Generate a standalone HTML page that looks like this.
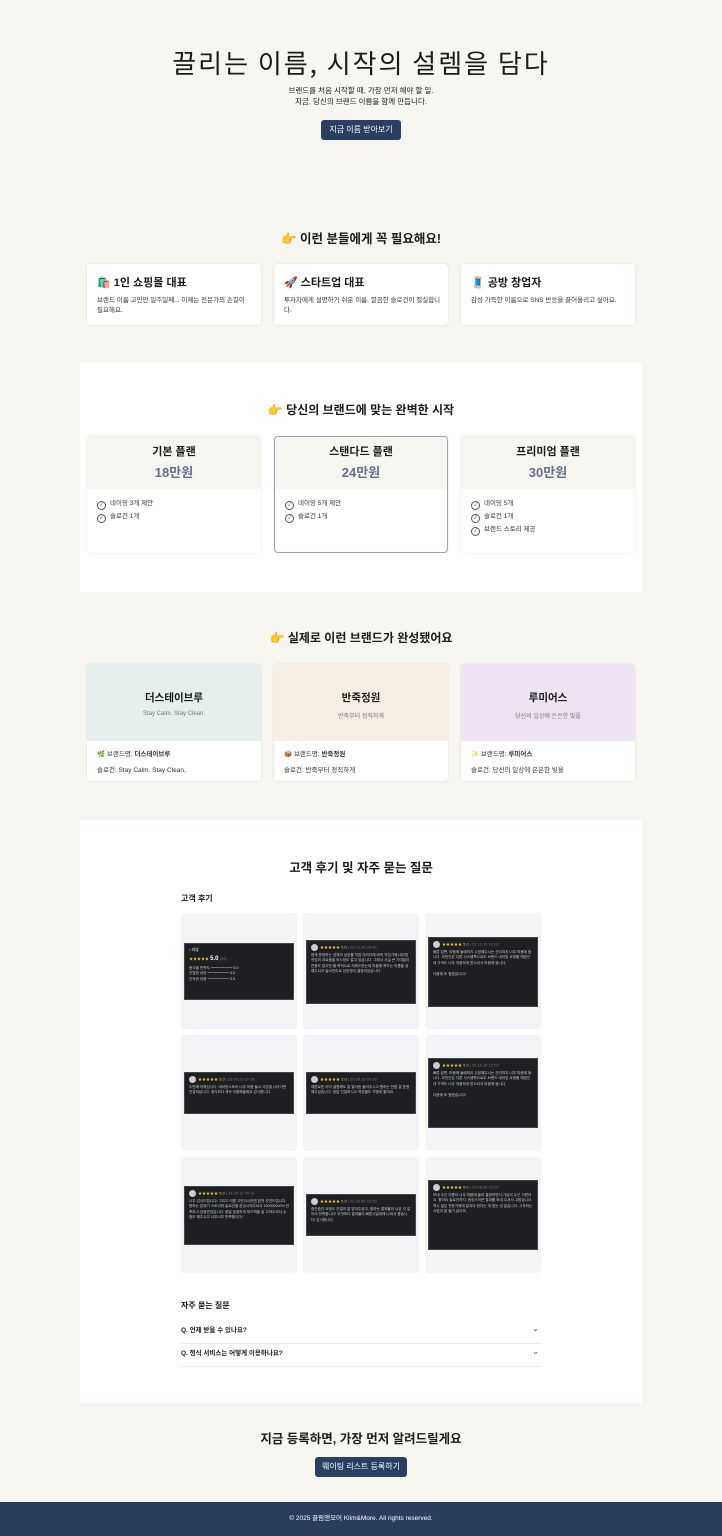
<!DOCTYPE html>
<html><head><meta charset="utf-8"><style>
*{margin:0;padding:0;box-sizing:border-box}
body{width:722px;height:1536px;background:#f6f5f0;font-family:"Liberation Sans","Noto Sans CJK KR",sans-serif;color:#1b1b1b;position:relative;overflow:hidden}
.a{position:absolute}
.c{text-align:center;left:0;width:722px}
.btn{background:#2b3f63;color:#fff;border-radius:3px;font-size:8px;text-align:center}
.card{background:#fff;border-radius:4px;box-shadow:0 0 2px rgba(0,0,0,.12)}
.ct{font-size:11px;font-weight:bold;left:10px;top:10px}
.cd{font-size:6.5px;left:10px;top:32px;right:12px;line-height:10px;color:#333}
.plan{background:#fff;border-radius:4px;box-shadow:0 0 2px rgba(0,0,0,.12);overflow:hidden}
.ph{background:#f6f5f0;height:53px;text-align:center}
.ph b{display:block;font-size:11px;padding-top:7px}
.ph i{display:block;font-style:normal;font-size:13px;font-weight:bold;color:#64708a;margin-top:3px}
.li{font-size:6.5px;color:#333;margin-left:10px;height:13px;line-height:13px}
.li:before{content:"✓";display:inline-block;width:7px;height:7px;border:0.8px solid #555;border-radius:50%;font-size:5px;line-height:6px;text-align:center;margin-right:4px;vertical-align:-1px}
.pf{background:#fff;border-radius:4px;box-shadow:0 0 2px rgba(0,0,0,.12);overflow:hidden}
.pt{height:77px;text-align:center}
.pt b{display:block;font-size:10.5px;padding-top:26px}
.pt i{display:block;font-style:normal;font-size:6px;color:#777;margin-top:6px}
.pb{font-size:6.5px;color:#333;padding:7px 10px 0}
.pb p{margin-bottom:6px}
.rv{background:#f3f4f6;border-radius:4px;width:116px;height:116px}
.im{position:absolute;background:#1e1f22;border:1px solid #444;left:3px;right:3px;padding:3px 4px;overflow:hidden}
.im .h{font-size:4px;color:#f2c744;white-space:nowrap}
.im .h span{color:#777}
.im .t{font-size:3.6px;color:#ccc;line-height:5.4px;margin-top:2px}
.im .av{display:inline-block;width:7px;height:7px;border-radius:50%;background:#ccc;vertical-align:middle;margin-right:2px}
.q{left:181px;width:360px;font-size:6.5px;font-weight:bold;border-bottom:1px solid #ececec;height:23px;line-height:20px}
.q:after{content:"⌄";position:absolute;right:2px;top:-2px;font-weight:normal;font-size:8px;color:#555}
</style></head><body>

<div class="a c" style="top:44px;font-size:26px;letter-spacing:2px;font-family:'Noto Sans CJK KR',sans-serif">끌리는 이름, 시작의 설렘을 담다</div>
<div class="a c" style="top:85px;font-size:7.5px;line-height:11px;color:#222">브랜드를 처음 시작할 때, 가장 먼저 해야 할 일.<br>지금, 당신의 브랜드 이름을 함께 만듭니다.</div>
<div class="a btn" style="left:321px;top:120px;width:80px;height:20px;line-height:20px">지금 이름 받아보기</div>

<div class="a c" style="top:228px;font-size:12.5px;font-weight:bold">👉 이런 분들에게 꼭 필요해요!</div>
<div class="a card" style="left:87px;top:264px;width:174px;height:61px"><div class="a ct">🛍️ 1인 쇼핑몰 대표</div><div class="a cd">브랜드 이름 고민만 일주일째... 이제는 전문가의 손길이 필요해요.</div></div>
<div class="a card" style="left:274px;top:264px;width:174px;height:61px"><div class="a ct">🚀 스타트업 대표</div><div class="a cd" style="right:4px">투자자에게 설명하기 쉬운 이름, 깔끔한 슬로건이 절실합니다.</div></div>
<div class="a card" style="left:461px;top:264px;width:174px;height:61px"><div class="a ct">🧵 공방 창업자</div><div class="a cd" style="right:4px">감성 가득한 이름으로 SNS 반응을 끌어올리고 싶어요.</div></div>

<div class="a" style="left:80px;top:363px;width:562px;height:229px;background:#fff"></div>
<div class="a c" style="top:401px;font-size:12px;font-weight:bold">👉 당신의 브랜드에 맞는 완벽한 시작</div>
<div class="a plan" style="left:87px;top:436px;width:174px;height:117px"><div class="ph"><b>기본 플랜</b><i>18만원</i></div><div style="height:8px"></div><div class="li">네이밍 3개 제안</div><div class="li">슬로건 1개</div></div>
<div class="a plan" style="left:274px;top:436px;width:174px;height:117px;border:1px solid #9ca3b3"><div class="ph" style="height:52px"><b style="padding-top:6px">스탠다드 플랜</b><i>24만원</i></div><div style="height:8px"></div><div class="li">네이밍 5개 제안</div><div class="li">슬로건 1개</div></div>
<div class="a plan" style="left:461px;top:436px;width:174px;height:117px"><div class="ph"><b>프리미엄 플랜</b><i>30만원</i></div><div style="height:8px"></div><div class="li">네이밍 5개</div><div class="li">슬로건 1개</div><div class="li">브랜드 스토리 제공</div></div>

<div class="a c" style="top:629px;font-size:12px;font-weight:bold">👉 실제로 이런 브랜드가 완성됐어요</div>
<div class="a pf" style="left:87px;top:664px;width:174px;height:117px"><div class="pt" style="background:#e5f0ee"><b>더스테이브루</b><i>Stay Calm. Stay Clean.</i></div><div class="pb"><p>🌿 브랜드명: <b>더스테이브루</b></p><p>슬로건: Stay Calm. Stay Clean.</p></div></div>
<div class="a pf" style="left:274px;top:664px;width:174px;height:117px"><div class="pt" style="background:#f5eee4"><b>반죽정원</b><i>반죽부터 정직하게</i></div><div class="pb"><p>📦 브랜드명: <b>반죽정원</b></p><p>슬로건: 반죽부터 정직하게</p></div></div>
<div class="a pf" style="left:461px;top:664px;width:174px;height:117px"><div class="pt" style="background:#eee3f3"><b>루미어스</b><i>당신의 일상에 은은한 빛을</i></div><div class="pb"><p>✨ 브랜드명: <b>루미어스</b></p><p>슬로건: 당신의 일상에 은은한 빛을</p></div></div>

<div class="a" style="left:80px;top:820px;width:562px;height:583px;background:#fff"></div>
<div class="a c" style="top:857px;font-size:12.5px;font-weight:bold">고객 후기 및 자주 묻는 질문</div>
<div class="a" style="left:181px;top:893px;font-size:8px;font-weight:bold">고객 후기</div>

<div class="a rv" style="left:181px;top:913px"><div class="im" style="top:30px;height:57px"><div class="h" style="color:#fff">‹ 리뷰</div><div class="h" style="margin-top:3px">★★★★★ <b style="color:#fff;font-size:6px">5.0</b> <span>(25)</span></div><div class="t" style="margin-top:4px">음식을 만족도 ━━━━━━ 5.0<br>친절한 상담 ━━━━━━ 5.0<br>신속한 대응 ━━━━━━ 5.0</div></div></div>
<div class="a rv" style="left:303px;top:913px"><div class="im" style="top:27px;height:64px"><div class="h"><i class="av"></i>★★★★★ 5.0 <span>| 23.10.26 20:46</span></div><div class="t">현재 운영하는 업체의 상호를 직접 여러차례 바꿔 직업가에 네이밍작업의 과로움을 어느정도 알고 있습니다. 그래서 사실 큰 기대없이 반응도 참고만 할 목적으로 의뢰드렸는데 마음에 쏙드는 이름을 정해주셔서 일사천리로 상호명이 결정되었습니다.</div></div></div>
<div class="a rv" style="left:425px;top:913px"><div class="im" style="top:24px;height:70px"><div class="h"><i class="av"></i>★★★★★ 5.0 <span>| 23.10.16 12:03</span></div><div class="t">빠른 답변, 마음에 들때까지 수정해주시는 관리까지 너무 마음에 듭니다. 조만간은 다른 사스템쪽으로도 브랜드 네이밍 요청할 예정인데 가격도 너무 저렴하게 받으셔서 마음에 듭니다.<br><br>다음에 또 뵙겠습니다!</div></div></div>
<div class="a rv" style="left:181px;top:1035px"><div class="im" style="top:37px;height:42px"><div class="h"><i class="av"></i>★★★★★ 5.0 <span>| 23.09.22 07:58</span></div><div class="t">두번째 의뢰입니다. 네이밍스토리 너무 마음 들고 사업일 나아가면 친절하십니다. 생각보다 계속 이용해볼래요 감사합니다.</div></div></div>
<div class="a rv" style="left:303px;top:1035px"><div class="im" style="top:37px;height:42px"><div class="h"><i class="av"></i>★★★★★ 5.0 <span>| 23.09.19 09:06</span></div><div class="t">예쁜로운 이어 설명해도 잘 알아듣 들어주시고 원하는 만큼 잘 표현해주셨습니다. 정말 친절하시고 작업물도 가볍게 할어요.</div></div></div>
<div class="a rv" style="left:425px;top:1035px"><div class="im" style="top:23px;height:70px"><div class="h"><i class="av"></i>★★★★★ 5.0 <span>| 23.10.16 12:03</span></div><div class="t">빠른 답변, 마음에 들때까지 수정해주시는 관리까지 너무 마음에 듭니다. 조만간은 다른 사스템쪽으로도 브랜드 네이밍 요청할 예정인데 가격도 너무 저렴하게 받으셔서 마음에 듭니다.<br><br>다음에 또 뵙겠습니다!</div></div></div>
<div class="a rv" style="left:181px;top:1157px"><div class="im" style="top:29px;height:59px"><div class="h"><i class="av"></i>★★★★★ 5.0 <span>| 23.09.12 00:14</span></div><div class="t">너무 감사드립니다! 그리고 이름 고민이시라면 완전 추천드립니다. 원하는 분위기 스토리와 슬로건을 완성시켜주셔서 100000000% 만족하고 감동받았습니다. 정말 꼼꼼하게 피드백을 잘 고쳐주셔서 수정도 해주시고 너무너무 만족합니다!</div></div></div>
<div class="a rv" style="left:303px;top:1157px"><div class="im" style="top:37px;height:42px"><div class="h"><i class="av"></i>★★★★★ 5.0 <span>| 23.09.05 22:53</span></div><div class="t">중간중간 요청도 친절히 잘 받아주셨고, 원하는 결과물이 나온 것 같아서 만족합니다! 무엇보다 결과물이 빠른시일내에 나와서 좋습니다! 감사합니다</div></div></div>
<div class="a rv" style="left:425px;top:1157px"><div class="im" style="top:23px;height:70px"><div class="h"><i class="av"></i>★★★★★ 5.0 <span>| 23.08.30 15:24</span></div><div class="t">보내 주신 이름이 너무 마음에 들어 결정하면서 가슴이 두근 거렸어요. 좋아요 슬로건까지, 정성스러운 결과를 보내 주셔서 고맙습니다. 역시 많은 전문가에게 맡겨야 한다는 게 맞는 것 같습니다. 시작하는 사업이 잘 될거 같아요.</div></div></div>

<div class="a" style="left:181px;top:1300px;font-size:8px;font-weight:bold">자주 묻는 질문</div>
<div class="a q" style="top:1321px">Q. 언제 받을 수 있나요?</div>
<div class="a q" style="top:1344px">Q. 정식 서비스는 어떻게 이용하나요?</div>

<div class="a c" style="top:1428px;font-size:12.5px;font-weight:bold">지금 등록하면, 가장 먼저 알려드릴게요</div>
<div class="a btn" style="left:315px;top:1457px;width:92px;height:20px;line-height:20px">웨이팅 리스트 등록하기</div>

<div class="a" style="left:0;top:1502px;width:722px;height:34px;background:#2a3d5f;color:#fff;font-size:6.5px;text-align:center;line-height:34px">© 2025 끌림앤모어 Klim&amp;More. All rights reserved.</div>
</body></html>
